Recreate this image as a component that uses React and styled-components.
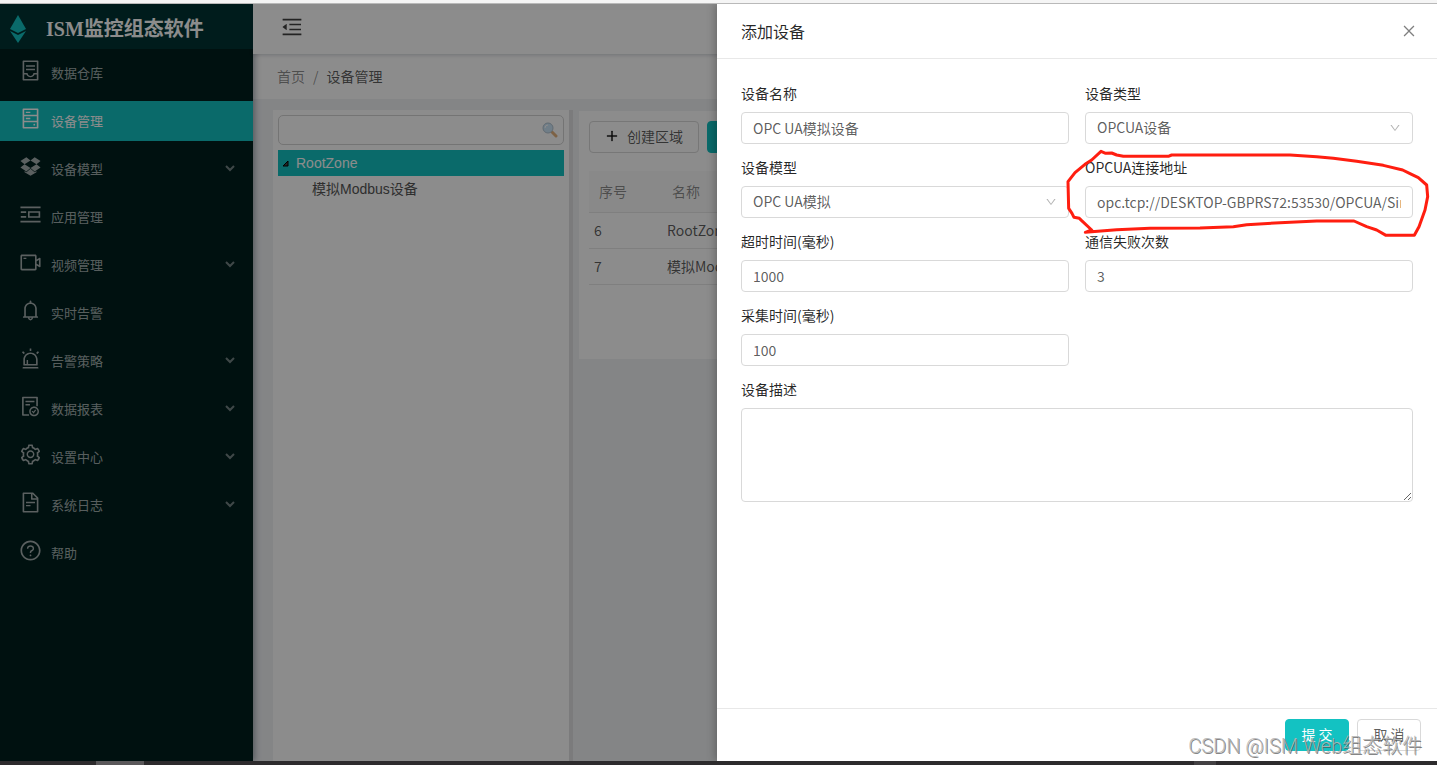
import styled, { createGlobalStyle } from "styled-components";
import {
    AiOutlineContainer,
    AiOutlineHdd,
    AiOutlineDropbox,
    AiOutlinePicRight,
    AiOutlineVideoCamera,
    AiOutlineBell,
    AiOutlineAlert,
    AiOutlineFileDone,
    AiOutlineSetting,
    AiOutlineFileText,
    AiOutlineQuestionCircle,
    AiOutlineMenuFold,
    AiOutlineClose,
    AiOutlineDown,
    AiOutlinePlus,
} from "react-icons/ai";

const GlobalStyle = createGlobalStyle`
    * {
        box-sizing: border-box;
    }
    body {
        margin: 0;
        font-family: "Noto Sans CJK SC", sans-serif;
        font-size: 14px;
        line-height: 21px;
        color: rgba(0, 0, 0, 0.65);
    }
    button, input, select, textarea {
        font: inherit;
        color: inherit;
    }
`

const Screen = styled.div`
    display: flex;
    flex-direction: column;
    min-height: 100vh;
`
const TopEdge = styled.div`
    height: 4px;
    background-color: #f5f5f5;
    border-bottom: 1px solid #b9b9b9;
`
const BottomEdge = styled.div`
    display: flex;
    justify-content: space-between;
    height: 4px;
    padding: 0 221px 0 96px;
    background-color: #2d2b2d;
`
const EdgeMark = styled.div`
    width: ${(props) => props.$width};
    background-color: ${(props) => props.$color};
`
const Frame = styled.div`
    position: relative;
    display: flex;
    flex: 1;
    overflow: hidden;
`

const Sidebar = styled.aside`
    flex: 0 0 253px;
    background-color: #001f1e;
    box-shadow: 2px 0 6px rgba(0, 21, 41, 0.35);
    z-index: 1;
`
const LogoBar = styled.div`
    display: flex;
    align-items: center;
    gap: 19px;
    height: 45px;
    padding: 4px 9px 0;
    background-color: #003434;
`
const LogoSvg = styled.svg`
    width: 18px;
    height: 28px;
    flex: none;
`
const LogoTitle = styled.h1`
    margin: 0;
    font-family: "Liberation Serif", "Noto Sans CJK SC", serif;
    font-size: 20px;
    line-height: 28px;
    font-weight: bold;
    color: #fff;
`
const Menu = styled.nav`
    display: flex;
    flex-direction: column;
    gap: 8px;
    padding: 4px 0;
`
const MenuLink = styled.a`
    display: flex;
    align-items: center;
    gap: 9px;
    height: 40px;
    padding: 0 18px 2px 19px;
    font-size: 13px;
    text-decoration: none;
    color: ${(props) => (props.$active ? "#fff" : "rgba(255, 255, 255, 0.65)")};
    background-color: ${(props) => (props.$active ? "#13c2c2" : "transparent")};
`
const MenuIcon = styled.span`
    display: flex;
    padding-bottom: 4px;
    font-size: 23px;
`
const MenuText = styled.span`
    flex: 1;
`
const ArrowSvg = styled.svg`
    width: 10px;
    height: 8px;
    fill: none;
    stroke: currentColor;
    stroke-width: 2;
    opacity: 0.7;
`

const Main = styled.main`
    display: flex;
    flex-direction: column;
    flex: 1;
    min-width: 0;
    background-color: #f0f2f5;
`
const Header = styled.header`
    display: flex;
    align-items: center;
    height: 50px;
    padding: 0 27px 4px;
    background-color: #fff;
    box-shadow: 0 1px 4px rgba(0, 21, 41, 0.2);
    z-index: 1;
`
const IconButton = styled.button`
    display: flex;
    padding: 0;
    border: none;
    background: none;
    font-size: ${(props) => props.$size};
    color: ${(props) => props.$color};
    cursor: pointer;
`
const Breadcrumb = styled.div`
    display: flex;
    align-items: center;
    gap: 8px;
    height: 45px;
    padding: 0 24px;
    background-color: #fff;
    color: rgba(0, 0, 0, 0.45);
`
const CrumbLink = styled.a`
    color: inherit;
    text-decoration: none;
`
const CrumbCurrent = styled.span`
    color: rgba(0, 0, 0, 0.65);
`
const Content = styled.div`
    display: flex;
    flex: 1;
    align-items: flex-start;
    padding: 11px 20px 0;
`

const TreePanel = styled.section`
    align-self: stretch;
    flex: 0 0 300px;
    padding: 5px;
    background-color: #fff;
    border-right: 4px solid #e0e1e2;
`
const SearchBox = styled.div`
    display: flex;
    align-items: center;
    height: 30px;
    margin-bottom: 5px;
    padding: 0 5px;
    border: 1px solid #d3d3d3;
    border-radius: 5px;
`
const SearchInput = styled.input`
    flex: 1;
    min-width: 0;
    border: none;
    outline: none;
    background: none;
`
const SearchSvg = styled.svg`
    width: 16px;
    height: 16px;
    opacity: 0.7;
`
const TreeRow = styled.div`
    display: flex;
    align-items: center;
    gap: 7px;
    height: 26px;
    padding-left: ${(props) => (props.$child ? "34px" : "4px")};
    font-family: "Liberation Sans", "Noto Sans CJK SC", sans-serif;
    color: ${(props) => (props.$active ? "#fff" : "#555")};
    background-color: ${(props) => (props.$active ? "#13c2c2" : "transparent")};
`
const TriangleSvg = styled.svg`
    width: 7px;
    height: 7px;
`

const Card = styled.section`
    flex: 1;
    min-height: 248px;
    margin: 1px 0 0 6px;
    padding: 10px;
    background-color: #fff;
`
const Toolbar = styled.div`
    display: flex;
    gap: 8px;
    margin-bottom: 18px;
`
const Button = styled.button`
    display: flex;
    align-items: center;
    justify-content: center;
    gap: 8px;
    height: 32px;
    min-width: 64px;
    padding: 0 15px 2px;
    border: 1px solid ${(props) => (props.$primary ? "#13c2c2" : "#d9d9d9")};
    border-radius: 4px;
    background-color: ${(props) => (props.$primary ? "#13c2c2" : "#fff")};
    color: ${(props) => (props.$primary ? "#fff" : "rgba(0, 0, 0, 0.65)")};
    white-space: nowrap;
    cursor: pointer;
`
const PlusIcon = styled(AiOutlinePlus)`
    font-size: 14px;
    color: #111;
    stroke: #111;
    stroke-width: 30;
`
const Table = styled.table`
    width: 100%;
    border-collapse: collapse;
    table-layout: fixed;
`
const Th = styled.th`
    width: ${(props) => props.$width || "auto"};
    height: 41px;
    padding: 0 10px;
    border-bottom: 1px solid #e8e8e8;
    background-color: #fafafa;
    font-weight: normal;
    text-align: left;
    color: rgba(0, 0, 0, 0.45);
`
const Td = styled.td`
    height: 36px;
    padding: 0 5px;
    border-bottom: 1px solid #e8e8e8;
`

const Mask = styled.div`
    position: absolute;
    inset: 0;
    background-color: rgba(0, 0, 0, 0.45);
    z-index: 2;
`
const DrawerPanel = styled.section`
    position: absolute;
    top: 0;
    right: 0;
    bottom: 0;
    display: flex;
    flex-direction: column;
    width: 720px;
    max-width: 100%;
    background-color: #fff;
    box-shadow: -2px 0 8px rgba(0, 0, 0, 0.25);
    z-index: 3;
`
const DrawerHeader = styled.div`
    display: flex;
    align-items: center;
    justify-content: space-between;
    height: 55px;
    padding: 0 20px 0 24px;
    border-bottom: 1px solid #e8e8e8;
`
const DrawerTitle = styled.h2`
    margin: 0;
    font-size: 16px;
    font-weight: normal;
    color: rgba(0, 0, 0, 0.85);
`
const Form = styled.form`
    display: grid;
    grid-template-columns: 1fr 1fr;
    align-content: start;
    gap: 13px 16px;
    flex: 1;
    padding: 24px;
`
const Field = styled.div`
    position: relative;
    display: flex;
    flex-direction: column;
    gap: 8px;
    grid-column: ${(props) => (props.$wide ? "1 / -1" : props.$first ? "1" : "auto")};
`
const Label = styled.label`
    color: rgba(0, 0, 0, 0.85);
`
const TextInput = styled.input`
    width: 100%;
    height: 32px;
    padding: 0 11px;
    border: 1px solid #d9d9d9;
    border-radius: 4px;
    background-color: #fff;
`
const SelectWrap = styled.div`
    position: relative;
`
const Select = styled.select`
    display: block;
    width: 100%;
    height: 32px;
    padding: 0 11px 2px;
    border: 1px solid #d9d9d9;
    border-radius: 4px;
    background-color: #fff;
    appearance: none;
`
const SelectArrow = styled(AiOutlineDown)`
    position: absolute;
    top: 10px;
    right: 12px;
    font-size: 12px;
    color: rgba(0, 0, 0, 0.3);
    pointer-events: none;
`
const TextArea = styled.textarea`
    display: block;
    width: 100%;
    height: 94px;
    padding: 4px 11px;
    border: 1px solid #d9d9d9;
    border-radius: 4px;
    resize: vertical;
`
const PenMark = styled.svg`
    position: absolute;
    top: -27px;
    left: -35px;
    width: 387px;
    height: 130px;
    fill: none;
    stroke: #ff1e10;
    stroke-width: 9;
    stroke-linecap: round;
    stroke-linejoin: round;
    pointer-events: none;
    z-index: 1;
`
const DrawerFooter = styled.div`
    display: flex;
    justify-content: flex-end;
    gap: 8px;
    padding: 10px 16px;
    border-top: 1px solid #e8e8e8;
`
const Watermark = styled.div`
    position: absolute;
    right: 15px;
    bottom: 1px;
    font-family: Roboto, "Noto Sans CJK SC", sans-serif;
    font-size: 20px;
    line-height: 28px;
    font-weight: 300;
    color: rgba(180, 180, 180, 0.9);
    text-shadow: 1px 1px 0 rgba(80, 80, 80, 0.7);
    white-space: nowrap;
    pointer-events: none;
    z-index: 4;
`

const menuList = [
    { name: "数据仓库", icon: AiOutlineContainer },
    { name: "设备管理", icon: AiOutlineHdd, active: true },
    { name: "设备模型", icon: AiOutlineDropbox, arrow: true },
    { name: "应用管理", icon: AiOutlinePicRight },
    { name: "视频管理", icon: AiOutlineVideoCamera, arrow: true },
    { name: "实时告警", icon: AiOutlineBell },
    { name: "告警策略", icon: AiOutlineAlert, arrow: true },
    { name: "数据报表", icon: AiOutlineFileDone, arrow: true },
    { name: "设置中心", icon: AiOutlineSetting, arrow: true },
    { name: "系统日志", icon: AiOutlineFileText, arrow: true },
    { name: "帮助", icon: AiOutlineQuestionCircle },
];

const zoneList = [
    { id: 6, name: "RootZone" },
    { id: 7, name: "模拟Modbus设备" },
];

function SideMenu(){
    return <Sidebar>
        <LogoBar>
            <LogoSvg viewBox="0 0 18 28">
                <path d="M9 0L17 14L9 18L1 14Z" fill="#13c2c2"/>
                <path d="M1 16L9 20L17 16L9 28Z" fill="#13c2c2"/>
            </LogoSvg>
            <LogoTitle>ISM监控组态软件</LogoTitle>
        </LogoBar>
        <Menu>
            {menuList.map(({ name, icon: Icon, active, arrow })=>(
                <MenuLink key={name} href="#" $active={active}>
                    <MenuIcon><Icon/></MenuIcon>
                    <MenuText>{name}</MenuText>
                    {arrow ? <ArrowSvg viewBox="0 0 10 8"><path d="M1 2L5 6L9 2"/></ArrowSvg> : null}
                </MenuLink>
            ))}
        </Menu>
    </Sidebar>
}

function ZoneTree(){
    return <TreePanel>
        <SearchBox>
            <SearchInput type="text" aria-label="搜索"/>
            <SearchSvg viewBox="0 0 16 16">
                <path d="M10 10L14 14" stroke="#d9924a" strokeWidth="3" strokeLinecap="round"/>
                <circle cx="6" cy="6" r="5" fill="#b9dcf5" stroke="#8fa9bd" strokeWidth="1"/>
                <path d="M3 6A3 3 0 0 1 6 3" fill="none" stroke="#fff" strokeWidth="1"/>
            </SearchSvg>
        </SearchBox>
        <TreeRow $active>
            <TriangleSvg viewBox="0 0 7 7"><path d="M6 1V6H1Z" fill="#444" stroke="#000"/></TriangleSvg>
            RootZone
        </TreeRow>
        <TreeRow $child>模拟Modbus设备</TreeRow>
    </TreePanel>
}

function ZoneTable(){
    return <Card>
        <Toolbar>
            <Button type="button"><PlusIcon/>创建区域</Button>
            <Button type="button" $primary><AiOutlinePlus/>添加设备</Button>
        </Toolbar>
        <Table>
            <thead>
                <tr>
                    <Th $width="73px">序号</Th>
                    <Th>名称</Th>
                </tr>
            </thead>
            <tbody>
                {zoneList.map((zone)=>(
                    <tr key={zone.id}>
                        <Td>{zone.id}</Td>
                        <Td>{zone.name}</Td>
                    </tr>
                ))}
            </tbody>
        </Table>
    </Card>
}

function InputField({ id, label, value, first, children }){
    return <Field $first={first}>
        <Label htmlFor={id}>{label}</Label>
        <TextInput id={id} type="text" defaultValue={value}/>
        {children}
    </Field>
}

function SelectField({ id, label, value }){
    return <Field>
        <Label htmlFor={id}>{label}</Label>
        <SelectWrap>
            <Select id={id} defaultValue={value}>
                <option>{value}</option>
            </Select>
            <SelectArrow/>
        </SelectWrap>
    </Field>
}

function DeviceDrawer(){
    return <DrawerPanel>
        <DrawerHeader>
            <DrawerTitle>添加设备</DrawerTitle>
            <IconButton type="button" aria-label="关闭" $size="16px" $color="rgba(0, 0, 0, 0.5)">
                <AiOutlineClose/>
            </IconButton>
        </DrawerHeader>
        <Form id="deviceForm">
            <InputField id="deviceName" label="设备名称" value="OPC UA模拟设备"/>
            <SelectField id="deviceType" label="设备类型" value="OPCUA设备"/>
            <SelectField id="deviceModel" label="设备模型" value="OPC UA模拟"/>
            <InputField id="opcuaUrl" label="OPCUA连接地址" value="opc.tcp://DESKTOP-GBPRS72:53530/OPCUA/SimulationServer">
                <PenMark viewBox="0 0 1161 390">
                    <path d="M125 300L95 272L88 265L72 262L66 250L56 235L54 155L75 128L105 103L125 90L153 64L167 70L185 69L200 75L220 79H355L365 75H720L800 80L850 85L920 94L1000 106L1058 120L1080 131L1105 143L1130 165L1133 200L1125 240L1107 290L1093 316H1008L980 300L950 290L912 273H800L690 278L590 284L550 290L450 294L300 295L200 299L106 307L125 300"/>
                </PenMark>
            </InputField>
            <InputField id="timeout" label="超时时间(毫秒)" value="1000"/>
            <InputField id="failCount" label="通信失败次数" value="3"/>
            <InputField id="interval" label="采集时间(毫秒)" value="100" first/>
            <Field $wide>
                <Label htmlFor="remark">设备描述</Label>
                <TextArea id="remark"/>
            </Field>
        </Form>
        <DrawerFooter>
            <Button type="submit" form="deviceForm" $primary>提 交</Button>
            <Button type="button">取 消</Button>
        </DrawerFooter>
    </DrawerPanel>
}

export default function App(){
    return <>
        <GlobalStyle/>
        <Screen>
            <TopEdge/>
            <Frame>
                <SideMenu/>
                <Main>
                    <Header>
                        <IconButton type="button" aria-label="收起菜单" $size="24px" $color="rgba(0, 0, 0, 0.75)">
                            <AiOutlineMenuFold/>
                        </IconButton>
                    </Header>
                    <Breadcrumb>
                        <CrumbLink href="#">首页</CrumbLink>
                        <span>/</span>
                        <CrumbCurrent>设备管理</CrumbCurrent>
                    </Breadcrumb>
                    <Content>
                        <ZoneTree/>
                        <ZoneTable/>
                    </Content>
                </Main>
                <Mask/>
                <DeviceDrawer/>
                <Watermark>CSDN @ISM Web组态软件</Watermark>
            </Frame>
            <BottomEdge>
                <EdgeMark $width="48px" $color="#5a585a"/>
                <EdgeMark $width="22px" $color="#434143"/>
            </BottomEdge>
        </Screen>
    </>
}
